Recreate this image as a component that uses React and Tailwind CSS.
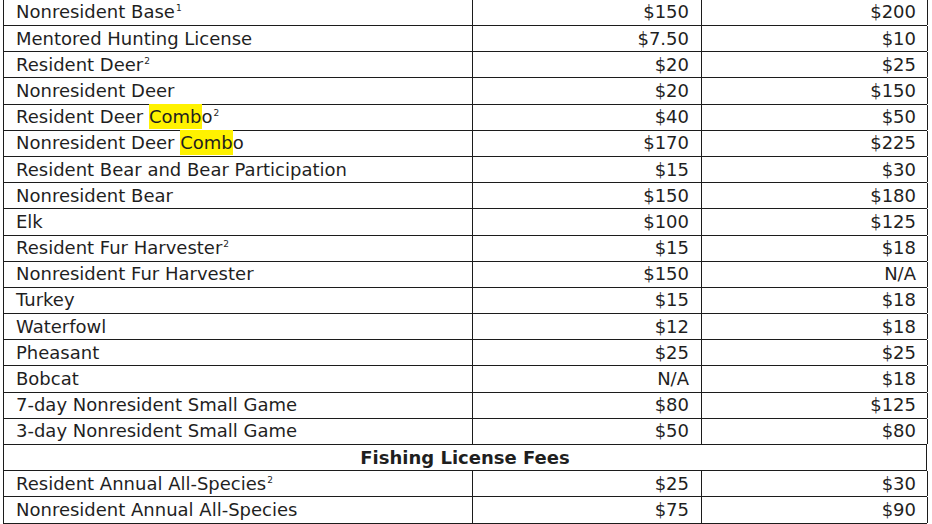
import React from "react";

// Fee rows: [label, superscript, first price, second price, highlight]
const rows = [
  ["Nonresident Base", "1", "$150", "$200"],
  ["Mentored Hunting License", "", "$7.50", "$10"],
  ["Resident Deer", "2", "$20", "$25"],
  ["Nonresident Deer", "", "$20", "$150"],
  ["Resident Deer Combo", "2", "$40", "$50", true],
  ["Nonresident Deer Combo", "", "$170", "$225", true],
  ["Resident Bear and Bear Participation", "", "$15", "$30"],
  ["Nonresident Bear", "", "$150", "$180"],
  ["Elk", "", "$100", "$125"],
  ["Resident Fur Harvester", "2", "$15", "$18"],
  ["Nonresident Fur Harvester", "", "$150", "N/A"],
  ["Turkey", "", "$15", "$18"],
  ["Waterfowl", "", "$12", "$18"],
  ["Pheasant", "", "$25", "$25"],
  ["Bobcat", "", "N/A", "$18"],
  ["7-day Nonresident Small Game", "", "$80", "$125"],
  ["3-day Nonresident Small Game", "", "$50", "$80"],
];

const fishing = [
  ["Resident Annual All-Species", "2", "$25", "$30"],
  ["Nonresident Annual All-Species", "", "$75", "$90"],
];

const Sup = ({ children }) => (
  <span className="text-[9px] leading-none relative -top-[7px] ml-px">{children}</span>
);

const Label = ({ text, sup, highlight }) => {
  // "Combo" is highlighted in yellow, the trailing "o" is not
  if (highlight) {
    const base = text.replace(/Combo$/, "");
    return (
      <span>
        {base}
        <span className="bg-[#fff200] py-[2px]">Comb</span>o
        {sup && <Sup>{sup}</Sup>}
      </span>
    );
  }
  return (
    <span>
      {text}
      {sup && <Sup>{sup}</Sup>}
    </span>
  );
};

const Row = ({ label, sup, a, b, highlight }) => (
  <div className="grid grid-cols-[469px_229px_226px] h-[26.2px] border-b border-[#1c1c1c]">
    <div className="border-r border-[#1c1c1c] pl-[12px] flex items-center">
      <Label text={label} sup={sup} highlight={highlight} />
    </div>
    <div className="border-r border-[#1c1c1c] pr-[12px] flex items-center justify-end">
      {a}
    </div>
    <div className="border-r border-[#1c1c1c] pr-[11px] flex items-center justify-end">
      {b}
    </div>
  </div>
);

export default function App() {
  return (
    <div className="w-[932px] h-[524px] overflow-hidden bg-white">
      <div
        className="ml-[3px] -mt-[1.2px] w-[924px] border-t border-l border-[#1c1c1c] text-[18px] leading-none text-[#1f1f1f]"
        style={{ fontFamily: '"DejaVu Sans", Verdana, sans-serif' }}
      >
        {rows.map((r) => (
          <Row key={r[0]} label={r[0]} sup={r[1]} a={r[2]} b={r[3]} highlight={r[4]} />
        ))}
        <div className="h-[26.2px] border-b border-r border-[#1c1c1c] flex items-center justify-center font-bold">
          Fishing License Fees
        </div>
        {fishing.map((r) => (
          <Row key={r[0]} label={r[0]} sup={r[1]} a={r[2]} b={r[3]} />
        ))}
      </div>
    </div>
  );
}
